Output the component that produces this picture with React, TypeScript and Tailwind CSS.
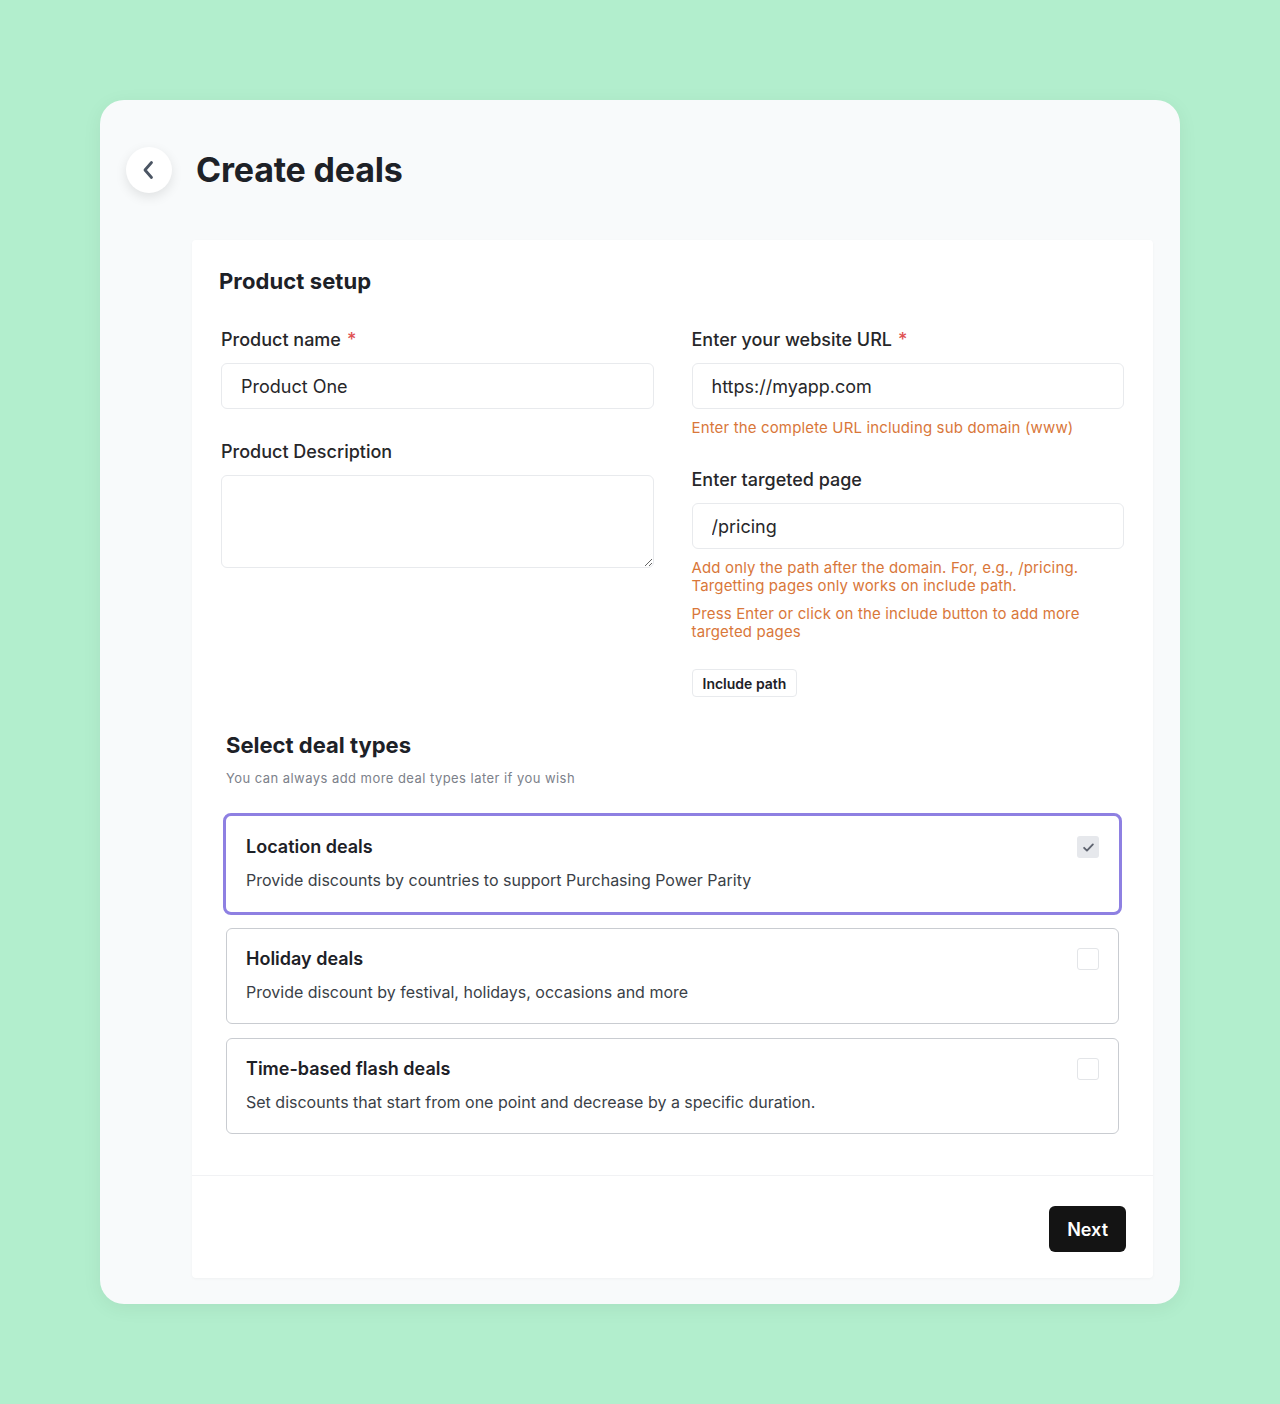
import React, { useState } from 'react';

const font = { fontFamily: 'Inter, "Noto Sans", sans-serif' };

const dealTypes = [
  {
    id: 'location',
    title: 'Location deals',
    description: 'Provide discounts by countries to support Purchasing Power Parity',
    gap: '',
  },
  {
    id: 'holiday',
    title: 'Holiday deals',
    description: 'Provide discount by festival, holidays, occasions and more',
    gap: 'mt-[13px]',
  },
  {
    id: 'flash',
    title: 'Time-based flash deals',
    description: 'Set discounts that start from one point and decrease by a specific duration.',
    gap: 'mt-[14px]',
  },
];

const Label = ({ children, required }: { children: React.ReactNode; required?: boolean }) => (
  <label className="block text-[18px] leading-[24px] font-medium text-[#27272a]">
    {children}
    {required && <span className="ml-[6px] text-[#e05252]">*</span>}
  </label>
);

const TextInput = ({ value }: { value: string }) => (
  <input
    type="text"
    defaultValue={value}
    className="mt-[11px] block w-full h-[46px] px-[19px] rounded-[6px] border border-[#e8eaed] bg-white text-[18px] text-[#27272a] outline-none"
  />
);

const App: React.FC = () => {
  const [selected, setSelected] = useState<string[]>(['location']);

  const toggle = (id: string) => {
    setSelected(prev => (prev.includes(id) ? prev.filter(x => x !== id) : [...prev, id]));
  };

  return (
    <div style={font} className="min-h-[1404px] w-full bg-[#b2eecd] pt-[100px] px-[100px]">
      <div className="rounded-[24px] bg-[#f8fafb] pb-[26px] shadow-[0_4px_20px_rgba(0,0,0,0.06)]">
        {/* header */}
        <div className="flex items-center h-[140px] pl-[26px]">
          <button className="flex items-center justify-center w-[46px] h-[46px] rounded-full bg-white shadow-[0_4px_12px_rgba(0,0,0,0.10)]">
            <svg width="24" height="24" viewBox="0 0 24 24" fill="none" stroke="#4b5563" strokeWidth="2.8" strokeLinecap="round" strokeLinejoin="round">
              <path d="M14.5 4.5L8 12l6.5 7.5" />
            </svg>
          </button>
          <h1 className="ml-[24px] text-[34px] leading-[40px] font-bold text-[#1d2127] tracking-[-0.2px]">Create deals</h1>
        </div>

        {/* panel */}
        <div className="ml-[92px] mr-[27px] bg-white rounded-[4px] shadow-[0_1px_3px_rgba(0,0,0,0.04)]">
          <div className="pt-[27px] pb-[41px]">
            <h2 className="px-[27px] text-[22px] leading-[28px] font-bold text-[#1d2127] tracking-[0.1px]">Product setup</h2>

            <div className="mt-[33px] px-[29px] grid grid-cols-2 gap-x-[38px]">
              <div>
                <Label required>Product name</Label>
                <TextInput value="Product One" />
                <div className="mt-[31px]">
                  <Label>Product Description</Label>
                  <textarea className="mt-[11px] block w-full h-[93px] px-[19px] py-[10px] rounded-[6px] border border-[#e8eaed] bg-white text-[18px] outline-none" />
                </div>
              </div>
              <div>
                <Label required>Enter your website URL</Label>
                <TextInput value="https://myapp.com" />
                <p className="mt-[9px] text-[15px] leading-[20px] text-[#d9773a] tracking-[0.15px]">
                  Enter the complete URL including sub domain (www)
                </p>
                <div className="mt-[30px]">
                  <Label>Enter targeted page</Label>
                  <TextInput value="/pricing" />
                  <p className="mt-[10px] text-[15px] leading-[18px] text-[#d9773a] tracking-[0.15px]">
                    Add only the path after the domain. For, e.g., /pricing.
                    <br />
                    Targetting pages only works on include path.
                  </p>
                  <p className="mt-[10px] text-[15px] leading-[18px] text-[#d9773a] tracking-[0.15px] pr-[30px]">
                    Press Enter or click on the include button to add more targeted pages
                  </p>
                  <button className="mt-[28px] h-[28px] px-[10px] rounded-[4px] border border-[#e8eaed] bg-white text-[14px] font-semibold text-[#1d2127]">
                    Include path
                  </button>
                </div>
              </div>
            </div>

            {/* deal types */}
            <div className="mt-[34px] px-[34px]">
              <h2 className="text-[22px] leading-[28px] font-bold text-[#1d2127]">Select deal types</h2>
              <p className="mt-[10px] text-[13px] leading-[18px] text-[#7c818a] tracking-[0.45px]">
                You can always add more deal types later if you wish
              </p>
              <div className="mt-[26px] flex flex-col">
                {dealTypes.map(deal => {
                  const isOn = selected.includes(deal.id);
                  return (
                    <div
                      key={deal.id}
                      onClick={() => toggle(deal.id)}
                      className={`relative cursor-pointer bg-white ${deal.gap} ${
                        isOn
                          ? '-mx-[3px] rounded-[8px] border-[3px] border-[#8e80e2] px-[20px] pt-[19px] pb-[20px]'
                          : 'rounded-[6px] border border-[#c9ccd1] px-[19px] pt-[18px] pb-[19px]'
                      }`}
                    >
                      <div className="text-[18px] leading-[24px] font-semibold text-[#1d2127]">{deal.title}</div>
                      <div className="mt-[9px] text-[16px] leading-[24px] text-[#3a3f47]">{deal.description}</div>
                      <div
                        className={`absolute w-[22px] h-[22px] rounded-[3px] flex items-center justify-center ${
                          isOn
                            ? 'top-[20px] right-[20px] bg-[#e6e8ec]'
                            : 'top-[19px] right-[19px] border-[1.5px] border-[#e3e5e8] bg-white'
                        }`}
                      >
                        {isOn && (
                          <svg width="15" height="15" viewBox="0 0 24 24" fill="none" stroke="#5f6470" strokeWidth="3" strokeLinecap="round" strokeLinejoin="round">
                            <path d="M5 12.5l4.5 4.5L19 7" />
                          </svg>
                        )}
                      </div>
                    </div>
                  );
                })}
              </div>
            </div>
          </div>

          {/* footer */}
          <div className="border-t border-[#f1f2f4] h-[103px] flex items-start justify-end pr-[27px] pt-[30px]">
            <button className="h-[46px] px-[18px] rounded-[6px] bg-[#141414] text-white text-[18px] font-semibold">
              Next
            </button>
          </div>
        </div>
      </div>
    </div>
  );
};

export default App;
